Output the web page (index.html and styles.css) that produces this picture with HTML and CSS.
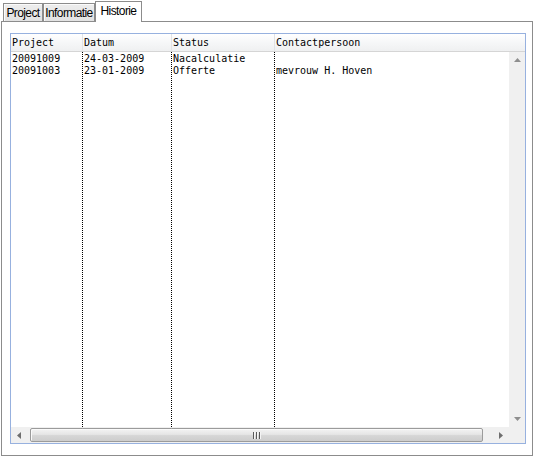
FILE: index.html
```html
<!DOCTYPE html>
<html>
<head>
<meta charset="utf-8">
<link rel="stylesheet" href="styles.css">
</head>
<body>
<div class="tabs">
  <div class="tab t1">Project</div>
  <div class="tab t2">Informatie</div>
  <div class="tab active t3">Historie</div>
</div>
<div class="panel">
  <div class="list">
    <div class="header">
      <div class="hc c1">Project</div>
      <div class="hc c2">Datum</div>
      <div class="hc c3">Status</div>
      <div class="hc c4">Contactpersoon</div>
    </div>
    <div class="rows">
      <div class="col c1"><div class="cell">20091009</div><div class="cell">20091003</div></div>
      <div class="col c2"><div class="cell">24-03-2009</div><div class="cell">23-01-2009</div></div>
      <div class="col c3"><div class="cell">Nacalculatie</div><div class="cell">Offerte</div></div>
      <div class="col c4"><div class="cell"></div><div class="cell">mevrouw H. Hoven</div></div>
    </div>
    <div class="vscroll">
      <span class="btn"><svg width="7" height="4" viewBox="0 0 7 4"><polygon points="3.5,0 7,4 0,4" fill="#8e8e8e"/></svg></span>
      <span class="btn"><svg width="7" height="4" viewBox="0 0 7 4"><polygon points="0,0 7,0 3.5,4" fill="#8e8e8e"/></svg></span>
    </div>
    <div class="hscroll">
      <span class="hbtn"><svg width="4" height="7" viewBox="0 0 4 7"><polygon points="4,0 4,7 0,3.5" fill="#6e6e6e"/></svg></span>
      <div class="thumb"><span class="grip"></span><span class="grip"></span><span class="grip"></span></div>
      <span class="hbtn"><svg width="4" height="7" viewBox="0 0 4 7"><polygon points="0,0 4,3.5 0,7" fill="#6e6e6e"/></svg></span>
    </div>
    <div class="corner"></div>
  </div>
</div>
</body>
</html>
```

FILE: styles.css
```css
html, body {
  margin: 0;
  padding: 0;
  background: #ffffff;
}
body {
  width: 535px;
  height: 459px;
  overflow: hidden;
}
.tabs {
  display: flex;
  align-items: flex-end;
  height: 21px;
  padding-left: 3px;
  font-family: "Liberation Sans", Arial, sans-serif;
  font-size: 12px;
  letter-spacing: -0.6px;
  color: #000;
}
.tab {
  box-sizing: border-box;
  height: 18px;
  border: 1px solid #8c8c8c;
  border-bottom: none;
  background: linear-gradient(#ededed, #e2e2e2);
  box-shadow: inset 1px 1px 0 #fbfbfb;
  text-align: center;
  line-height: 14px;
  padding-top: 2px;
}
.t1 { width: 40px; }
.t2 { width: 52px; }
.t3 { width: 47px; }
.tab.active {
  position: relative;
  z-index: 2;
  height: 21px;
  margin-bottom: -1px;
  background: #ffffff;
  box-shadow: none;
  padding-top: 2px;
}
.panel {
  box-sizing: border-box;
  width: 532px;
  height: 435px;
  margin-left: 1px;
  border: 1px solid #8c8c8c;
  background: #ffffff;
  padding: 11px 0 0 8px;
}
.list {
  box-sizing: border-box;
  width: 516px;
  height: 411px;
  border: 1px solid #97b1df;
  background: #fff;
  display: grid;
  grid-template-columns: 1fr 16px;
  grid-template-rows: 18px 1fr 16px;
  font-family: "DejaVu Sans Mono", monospace;
  font-size: 10px;
  color: #000;
}
.header {
  grid-column: 1 / 3;
  display: flex;
  box-sizing: border-box;
  border-bottom: 1px solid #d5d5d5;
  background: linear-gradient(#ffffff, #f6f7f8 50%, #eff0f1);
}
.hc {
  box-sizing: border-box;
  line-height: 17px;
  padding-left: 1px;
  white-space: nowrap;
}
.c1 { width: 72px; }
.c2 { width: 89px; }
.c3 { width: 103px; }
.c4 { flex: 1; }
.header .c1, .header .c2, .header .c3 {
  border-right: 1px solid #e2e3e4;
}
.rows {
  display: flex;
  min-height: 0;
}
.col {
  box-sizing: border-box;
  padding-top: 1px;
}
.rows .c1, .rows .c2, .rows .c3 {
  border-right: 1px dotted #000;
}
.cell {
  height: 12px;
  line-height: 12px;
  padding-left: 1px;
  white-space: nowrap;
}
.vscroll {
  background: #f0f0f0;
  display: flex;
  flex-direction: column;
  justify-content: space-between;
}
.btn {
  height: 16px;
  display: flex;
  align-items: center;
  justify-content: center;
}
.hscroll {
  background: #f0f0f0;
  display: flex;
  align-items: center;
}
.hbtn {
  width: 16px;
  height: 16px;
  display: flex;
  align-items: center;
  justify-content: center;
}
.thumb {
  flex: 1;
  box-sizing: border-box;
  height: 14px;
  margin-left: 3px;
  margin-right: 10px;
  border: 1px solid #9b9b9b;
  border-radius: 2px;
  background: linear-gradient(#f3f3f3, #e6e6e6 45%, #d6d6d6 55%, #cdcdcd);
  box-shadow: inset 1px 1px 0 #fafafa;
  display: flex;
  align-items: center;
  justify-content: center;
  gap: 1px;
}
.grip {
  width: 1px;
  height: 7px;
  background: #5a5a5a;
  border-right: 1px solid #f4f4f4;
}
.corner {
  background: #f0f0f0;
}
```
